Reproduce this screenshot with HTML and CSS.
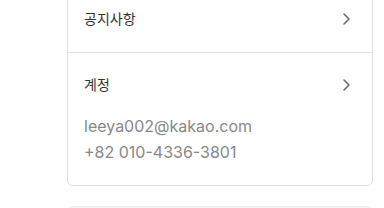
FILE: index.html
```html
<!DOCTYPE html>
<html lang="ko">
<head>
    <meta charset="UTF-8">
    <meta name="viewport" content="width=device-width, initial-scale=1.0">
    <title>설정</title>
    <link rel="stylesheet" href="styles.css">
</head>
<body>
    <div class="page">
        <div class="card">
            <div class="row">
                <div class="row-title">공지사항</div>
                <svg class="chevron" width="16" height="16" viewBox="0 0 16 16"><path d="M6 3 L11 8 L6 13" fill="none" stroke="#6b6b6b" stroke-width="1.6" stroke-linecap="round" stroke-linejoin="round"/></svg>
            </div>
            <div class="row">
                <div class="row-body">
                    <div class="row-title">계정</div>
                    <div class="row-detail">leeya002@kakao.com</div>
                    <div class="row-detail">+82 010-4336-3801</div>
                </div>
                <svg class="chevron" width="16" height="16" viewBox="0 0 16 16"><path d="M6 3 L11 8 L6 13" fill="none" stroke="#6b6b6b" stroke-width="1.6" stroke-linecap="round" stroke-linejoin="round"/></svg>
            </div>
        </div>
        <div class="card card-next"></div>
    </div>
</body>
</html>
```

FILE: styles.css
```css
body {
    margin: 0;
    background-color: #ffffff;
    font-family: Inter, "Noto Sans CJK KR", sans-serif;
    overflow: hidden;
}
.page {
    margin-top: -14px;
    padding-left: 67px;
    width: 306px;
    display: flex;
    flex-direction: column;
    gap: 20px;
}
.card {
    border: 1px solid #e2e2e2;
    border-radius: 5px;
    background-color: #ffffff;
}
.card-next {
    height: 60px;
    background-color: #f7f7f7;
    border-color: #ececec;
}
.row {
    display: flex;
    justify-content: space-between;
    align-items: flex-start;
    padding: 18px 16px 19px 16px;
}
.row + .row {
    border-top: 1px solid #e2e2e2;
}
.row:last-child {
    padding-bottom: 20px;
}
.row-body {
    display: flex;
    flex-direction: column;
}
.row-title {
    font-size: 14px;
    line-height: 28px;
    color: #333333;
}
.row-title + .row-detail {
    margin-top: 14px;
}
.row-detail {
    font-size: 16px;
    line-height: 26px;
    color: #888888;
}
.chevron {
    margin-top: 6px;
    margin-right: 2px;
}
```
